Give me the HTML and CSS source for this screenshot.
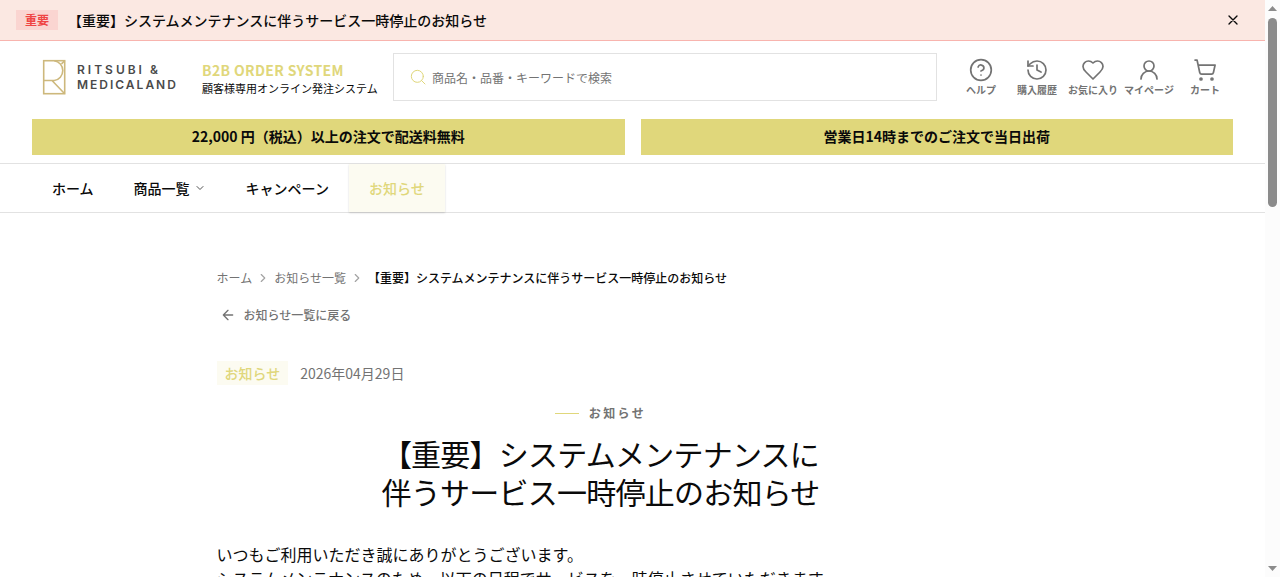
FILE: index.html
```html
<!DOCTYPE html>
<html lang="ja">
<head>
<meta charset="UTF-8">
<meta name="viewport" content="width=device-width, initial-scale=1.0">
<title>【重要】システムメンテナンスに伴うサービス一時停止のお知らせ</title>
<link rel="stylesheet" href="styles.css">
</head>
<body>

<div class="notice-bar">
    <span class="notice-label">重要</span>
    <a href="#" class="notice-text">【重要】システムメンテナンスに伴うサービス一時停止のお知らせ</a>
    <button type="button" class="notice-close" aria-label="閉じる">
        <svg class="icon" width="16" height="16" viewBox="0 0 24 24" stroke-width="2"><path d="M18 6 6 18M6 6l12 12"/></svg>
    </button>
</div>

<header class="header">
    <div class="header-top">
        <a href="#" class="logo">
            <svg width="24" height="36" viewBox="0 0 24 36" fill="none" stroke="#cdb87c" stroke-width="1.6">
                <rect x="1.700" y="1.700" width="21" height="33"/>
                <path d="M1.700 21.500h10.500a10 10 0 0 0 0-19.800M10 21.500l12.700 13.200M22.700 1.700l-3.200 3.200"/>
            </svg>
            <span class="logo-text"><span class="logo-wide">RITSUBI</span> &amp;<br>MEDICALAND</span>
        </a>
        <div class="system-name">
            <strong>B2B ORDER SYSTEM</strong>
            <span>顧客様専用オンライン発注システム</span>
        </div>
        <form class="search">
            <svg class="icon" width="16" height="16" viewBox="0 0 24 24" stroke-width="1.5"><circle cx="11" cy="11" r="9"/><path d="m22.500 22.500-5.200-5.200"/></svg>
            <input type="search" aria-label="商品検索" placeholder="商品名・品番・キーワードで検索">
        </form>
        <div class="user-menu">
            <a href="#">
                <svg class="icon" width="24" height="24" viewBox="0 0 24 24" stroke-width="1.7"><circle cx="12" cy="12" r="10.300"/><path d="M9.100 9a3 3 0 0 1 5.830 1c0 2-3 3-3 3M12 17h.010"/></svg>
                ヘルプ
            </a>
            <a href="#">
                <svg class="icon" width="24" height="24" viewBox="0 0 24 24" stroke-width="1.7"><path d="M3 12a9 9 0 1 0 9-9 9.750 9.750 0 0 0-6.740 2.740L3 8"/><path d="M3 3v5h5M12 7v5l4 2"/></svg>
                購入履歴
            </a>
            <a href="#">
                <svg class="icon" width="24" height="24" viewBox="0 0 24 24" stroke-width="1.7"><path d="M19 14c1.490-1.460 3-3.210 3-5.500A5.500 5.500 0 0 0 16.500 3c-1.760 0-3 .5-4.500 2-1.500-1.500-2.740-2-4.500-2A5.500 5.500 0 0 0 2 8.500c0 2.300 1.500 4.050 3 5.500l7 7Z"/></svg>
                お気に入り
            </a>
            <a href="#">
                <svg class="icon" width="24" height="24" viewBox="0 0 24 24" stroke-width="1.7"><circle cx="12" cy="8" r="5"/><path d="M20 21a8 8 0 0 0-16 0"/></svg>
                マイページ
            </a>
            <a href="#">
                <svg class="icon" width="24" height="24" viewBox="0 0 24 24" stroke-width="1.7"><circle cx="8" cy="21" r="1"/><circle cx="19" cy="21" r="1"/><path d="M2.050 2.050h2l2.660 12.420a2 2 0 0 0 2 1.580h9.780a2 2 0 0 0 1.950-1.570l1.650-7.430H5.120"/></svg>
                カート
            </a>
        </div>
    </div>
    <div class="promo">
        <p>22,000 円（税込）以上の注文で配送料無料</p>
        <p>営業日14時までのご注文で当日出荷</p>
    </div>
</header>

<nav class="nav">
    <a href="#">ホーム</a>
    <a href="#">商品一覧 <svg class="icon chevron" width="12" height="12" viewBox="0 0 24 24" stroke-width="2"><path d="m6 9 6 6 6-6"/></svg></a>
    <a href="#">キャンペーン</a>
    <a href="#" class="active">お知らせ</a>
</nav>

<main class="main">
    <div class="breadcrumb">
        <a href="#">ホーム</a>
        <svg class="icon" width="14" height="14" viewBox="0 0 24 24" stroke-width="2"><path d="m9 18 6-6-6-6"/></svg>
        <a href="#">お知らせ一覧</a>
        <svg class="icon" width="14" height="14" viewBox="0 0 24 24" stroke-width="2"><path d="m9 18 6-6-6-6"/></svg>
        <span>【重要】システムメンテナンスに伴うサービス一時停止のお知らせ</span>
    </div>

    <a href="#" class="back">
        <svg class="icon" width="16" height="16" viewBox="0 0 24 24" stroke-width="2"><path d="m12 19-7-7 7-7M19 12H5"/></svg>
        お知らせ一覧に戻る
    </a>

    <article class="article">
        <div class="meta">
            <span class="category">お知らせ</span>
            <time datetime="2026-04-29">2026年04月29日</time>
        </div>
        <p class="eyebrow">お知らせ</p>
        <h1>【重要】システムメンテナンスに<br>伴うサービス一時停止のお知らせ</h1>
        <p class="body-text">いつもご利用いただき誠にありがとうございます。<br>システムメンテナンスのため、以下の日程でサービスを一時停止させていただきます。</p>
    </article>
</main>

<div class="scrollbar" aria-hidden="true">
    <svg width="9" height="5" viewBox="0 0 9 5"><path d="M0 5 4.500 0 9 5z"/></svg>
    <div class="scroll-track"><div class="scroll-thumb"></div></div>
    <svg width="9" height="5" viewBox="0 0 9 5"><path d="M0 0h9L4.500 5z"/></svg>
</div>

</body>
</html>
```
FILE: styles.css
```css
* {
    box-sizing: border-box;
}
html {
    scrollbar-width: none;
}
body {
    margin: 0;
    padding-right: 15px;
    background: #fff;
    color: #0a0a0a;
    font-family: "Noto Sans CJK JP", sans-serif;
    font-size: 14px;
    line-height: 20px;
}
a {
    color: inherit;
    text-decoration: none;
}
p, h1 {
    margin: 0;
}
.icon {
    flex: none;
    fill: none;
    stroke: currentColor;
    stroke-linecap: round;
    stroke-linejoin: round;
}

/* notice */
.notice-bar {
    display: flex;
    align-items: center;
    gap: 10px;
    height: 41px;
    padding: 0 16px;
    background: #fbe8e2;
    border-bottom: 1px solid #f8b4ae;
}
.notice-label {
    padding: 0 9px;
    background: #fad5d1;
    color: #ef4444;
    font-size: 12px;
    font-weight: 700;
}
.notice-text {
    flex: 1;
    font-weight: 500;
}
.notice-close {
    display: flex;
    padding: 8px;
    border: none;
    background: none;
    color: #0a0a0a;
    cursor: pointer;
}

/* header */
.header {
    padding: 12px 32px 8px;
}
.header-top {
    display: flex;
    align-items: center;
    gap: 16px;
    height: 48px;
}
.logo {
    display: flex;
    align-items: center;
    gap: 11px;
    width: 154px;
    padding-left: 10px;
}
.logo-text {
    color: #4a4a4a;
    font-family: Inter, sans-serif;
    font-size: 12px;
    font-weight: 600;
    line-height: 15px;
    letter-spacing: 2px;
    white-space: nowrap;
}
.logo-wide {
    letter-spacing: 3px;
}
.system-name {
    display: flex;
    flex-direction: column;
    width: 175px;
    padding-top: 2px;
    font-size: 11px;
    line-height: 16px;
    white-space: nowrap;
}
.system-name strong {
    color: #e0d77b;
    font-size: 14px;
    line-height: 20px;
    letter-spacing: 0.025em;
}
.search {
    display: flex;
    flex: 1;
    align-items: center;
    gap: 6px;
    height: 48px;
    padding: 0 16px;
    border: 1px solid #e2e2e2;
    color: #e0d77b;
}
.search input {
    flex: 1;
    min-width: 0;
    padding: 0;
    border: none;
    outline: none;
    background: none;
    color: #0a0a0a;
    font-family: inherit;
    font-size: 12px;
}
.search input::placeholder {
    color: #737373;
}
.user-menu {
    display: flex;
}
.user-menu a {
    display: flex;
    flex-direction: column;
    align-items: center;
    gap: 2px;
    width: 56px;
    color: #737373;
    font-size: 10px;
    font-weight: 700;
    line-height: 12px;
    white-space: nowrap;
}
.promo {
    display: grid;
    grid-template-columns: 1fr 1fr;
    gap: 16px;
    margin-top: 18px;
}
.promo p {
    padding: 7px 8px 9px;
    background: #e0d77b;
    font-weight: 700;
    text-align: center;
}

/* navigation */
.nav {
    display: flex;
    height: 50px;
    padding: 0 32px;
    border-top: 1px solid #e2e2e2;
    border-bottom: 1px solid #e2e2e2;
}
.nav a {
    display: flex;
    align-items: center;
    gap: 4px;
    padding: 0 20px;
    font-weight: 500;
}
.nav .chevron {
    color: #525252;
}
.nav .active {
    background: #fcfbf1;
    color: #e0d77b;
    box-shadow: 0 1px 2px rgba(0, 0, 0, 0.15);
}

/* article page */
.main {
    max-width: 896px;
    min-height: 1430px;
    margin: 0 auto;
    padding: 55px 32px;
}
.breadcrumb {
    display: flex;
    align-items: center;
    gap: 4px;
    color: #737373;
    font-size: 12px;
}
.breadcrumb .icon {
    color: #a3a3a3;
}
.breadcrumb span {
    color: #0a0a0a;
    font-weight: 500;
}
.back {
    display: inline-flex;
    align-items: center;
    gap: 8px;
    margin-top: 17px;
    padding-left: 3px;
    color: #737373;
    font-size: 12px;
    font-weight: 500;
}
.article {
    max-width: 768px;
    margin-top: 34px;
}
.meta {
    display: flex;
    align-items: center;
    gap: 12px;
    color: #737373;
}
.category {
    padding: 2px 8px;
    background: #fcfbf1;
    color: #e0d77b;
    font-weight: 500;
}
.eyebrow {
    display: flex;
    align-items: center;
    justify-content: center;
    gap: 10px;
    margin-top: 18px;
    color: #737373;
    font-size: 12px;
    font-weight: 700;
    letter-spacing: 0.2em;
}
.eyebrow::before {
    content: "";
    width: 24px;
    height: 1px;
    background: #e0d77b;
}
.article h1 {
    margin-top: 11px;
    font-size: 30px;
    font-weight: 400;
    line-height: 38px;
    letter-spacing: -0.025em;
    text-align: center;
}
.body-text {
    margin-top: 32px;
    font-size: 16px;
    line-height: 24px;
}

/* scrollbar */
.scrollbar {
    position: fixed;
    top: 0;
    right: 0;
    bottom: 0;
    display: flex;
    flex-direction: column;
    align-items: center;
    gap: 7px;
    width: 15px;
    padding: 6px 0;
    background: #fcfcfc;
}
.scrollbar svg {
    flex: none;
    fill: #8b8b8b;
}
.scroll-track {
    flex: 1;
    width: 9px;
}
.scroll-thumb {
    height: 35%;
    border-radius: 5px;
    background: #8b8b8b;
}
```
